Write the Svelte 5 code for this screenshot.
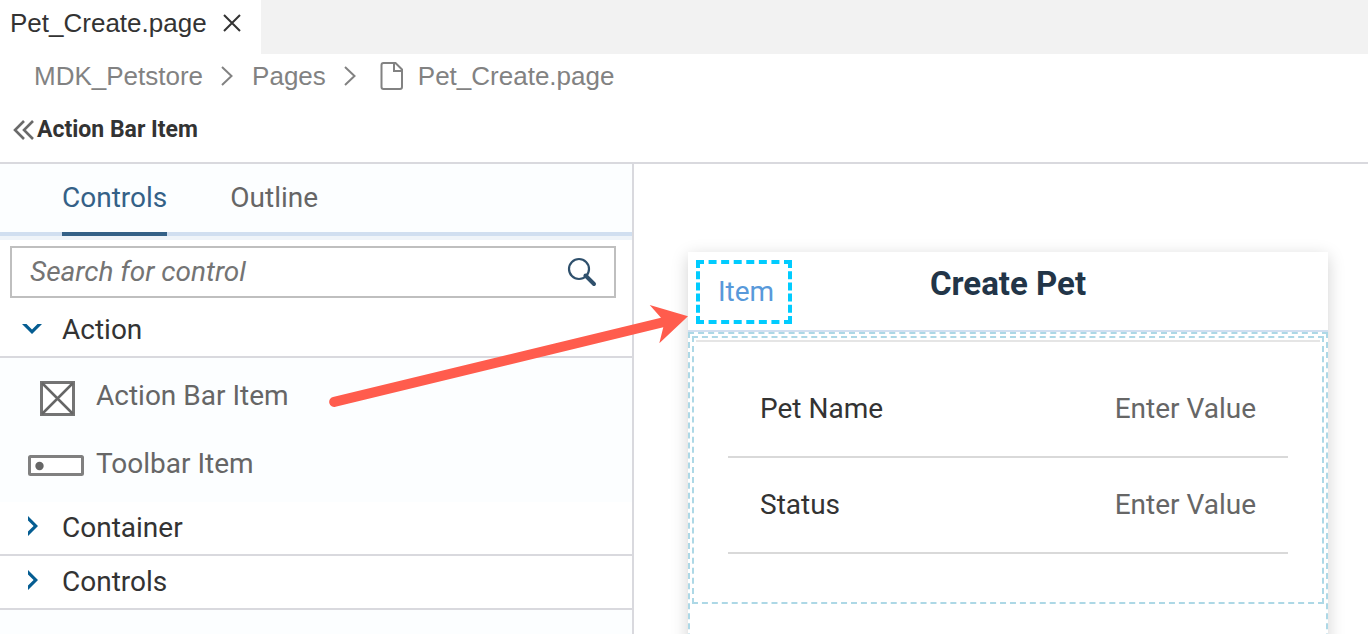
<script>
  const crumbs = ['MDK_Petstore', 'Pages'];
  const fields = ['Pet Name', 'Status'];
  let query = $state('');
  let tab = $state('Controls');
</script>

<div class="app">
  <header class="tabs">
    <div class="file-tab">
      <span>Pet_Create.page</span>
      <button class="plain" aria-label="Close">
        <svg width="18" height="18" viewBox="0 0 18 18"><path d="M1 1L17 17M17 1L1 17" fill="none" stroke="#333" stroke-width="2" /></svg>
      </button>
    </div>
  </header>

  <nav class="crumbs" aria-label="Path">
    {#each crumbs as crumb}
      <a href="#top">{crumb}</a>
      <svg class="sep" width="12" height="20" viewBox="0 0 12 20"><path d="M1 1L10.500 10L1 19" fill="none" stroke="#828282" stroke-width="2" /></svg>
    {/each}
    <svg class="file" width="24" height="28" viewBox="0 0 24 28">
      <path d="M3.500 1H15.500L22 7.500V25Q22 27 20 27H3.500Q1.500 27 1.500 25V3Q1.500 1 3.500 1Z M14 1V9H22" fill="none" stroke="#828282" stroke-width="2" />
    </svg>
    <a href="#top">Pet_Create.page</a>
  </nav>

  <div class="heading">
    <button class="plain" aria-label="Collapse">
      <svg width="22" height="20" viewBox="0 0 22 20"><path d="M11 1L2 10L11 19M20 1L11 10L20 19" fill="none" stroke="#6a6a6a" stroke-width="2.600" /></svg>
    </button>
    <h1>Action Bar Item</h1>
  </div>

  <main>
    <aside>
      <div class="panel-tabs" role="tablist">
        {#each ['Controls', 'Outline'] as name}
          <button role="tab" aria-selected={tab === name} class:active={tab === name} onclick={() => (tab = name)}>{name}</button>
        {/each}
      </div>
      <div class="search-area">
        <div class="search">
          <input type="text" aria-label="Search for control" placeholder="Search for control" bind:value={query} />
          <button class="plain" aria-label="Search">
            <svg width="30" height="30" viewBox="0 0 30 30">
              <circle cx="12" cy="12" r="10" fill="none" stroke="#2f506c" stroke-width="2.200" />
              <path d="M18.500 18.500L27 27" fill="none" stroke="#2f506c" stroke-width="4" stroke-linecap="round" />
            </svg>
          </button>
        </div>
      </div>

      <button class="group">
        <svg width="20" height="20" viewBox="0 0 20 20"><path d="M0 4H4.500L10 9.600L15.500 4H20L10 14Z" fill="#055d92" /></svg>
        Action
      </button>
      <div class="items">
        <div class="item">
          <svg width="56" height="40" viewBox="0 0 56 40">
            <rect x="13.500" y="6.500" width="32" height="32" fill="#fff" stroke="#747474" stroke-width="3" />
            <path d="M14 7L45 38M45 7L14 38" stroke="#666" stroke-width="2.500" />
          </svg>
          Action Bar Item
        </div>
        <div class="item">
          <svg width="56" height="40" viewBox="0 0 56 40">
            <rect x="1.500" y="12.500" width="53" height="18" rx="1" fill="#fff" stroke="#808080" stroke-width="3" />
            <circle cx="11.500" cy="22" r="4.200" fill="#666" />
          </svg>
          Toolbar Item
        </div>
      </div>
      {#each ['Container', 'Controls'] as name}
        <button class="group">
          <svg width="20" height="24" viewBox="0 0 20 24"><path d="M6 0V4.500L11.600 10L6 15.500V20L16 10Z" fill="#055d92" /></svg>
          {name}
        </button>
      {/each}
    </aside>

    <section class="canvas">
      <div class="device">
        <div class="action-bar">
          <button class="bar-item">Item</button>
          <h2>Create Pet</h2>
        </div>
        <div class="page-body">
          <div class="form">
            {#each fields as field}
              <label class="field">
                <span>{field}</span>
                <input type="text" placeholder="Enter Value" />
              </label>
            {/each}
          </div>
        </div>
      </div>
    </section>
  </main>

  <svg class="arrow" width="362" height="106" viewBox="328 303 362 106" aria-hidden="true">
    <path d="M333 397L661 317.700L649.700 305L688 316.300L659.300 343.300L663.300 327.300L335.500 406.800A5 5 0 0 1 333 397Z" fill="#ff5c4d" />
  </svg>
</div>

<style>
  :global(body) { background: #fff; }
  * { box-sizing: border-box; }
  .app {
    position: relative;
    height: 100vh;
    display: flex;
    flex-direction: column;
    overflow: hidden;
    font: 28px/36px Roboto, sans-serif;
    color: #333;
  }
  button, input { font: inherit; color: inherit; }
  svg { display: block; flex: none; }
  .plain { border: 0; background: none; padding: 0; }

  .tabs { display: flex; flex: none; height: 54px; background: #f2f2f2; }
  .file-tab {
    display: flex;
    align-items: center;
    gap: 16px;
    padding: 0 20px 8px 10px;
    background: #fff;
    font: 26px/32px "Liberation Sans", sans-serif;
  }
  .crumbs {
    display: flex;
    flex: none;
    align-items: center;
    height: 44px;
    padding-left: 34px;
    font: 26px/32px "Liberation Sans", sans-serif;
  }
  .crumbs a { color: #828282; text-decoration: none; }
  .sep { margin: 0 19px 0 18px; }
  .file { margin: 0 14px 0 5px; }
  .heading {
    display: flex;
    flex: none;
    align-items: center;
    gap: 2px;
    height: 66px;
    padding-left: 13px;
    border-bottom: 2px solid #d9d9de;
  }
  h1 { margin: 0; font-size: 23px; line-height: 28px; }

  main { display: flex; flex: 1; min-height: 0; }
  aside {
    flex: none;
    width: 634px;
    max-width: 50%;
    background: #fcfeff;
    border-right: 2px solid #d9d9de;
  }
  .panel-tabs {
    display: flex;
    gap: 63px;
    height: 72px;
    padding-left: 62px;
    box-shadow: inset 0 -4px #d1dff0;
  }
  .panel-tabs button {
    border: 0;
    border-bottom: 4px solid transparent;
    background: none;
    padding: 0;
    color: #666;
  }
  .panel-tabs .active { border-color: #346187; color: #346187; }
  .search-area {
    padding: 6px 16px 6px 10px;
    border-top: 4px solid #eff4f9;
    background: #fff;
  }
  .search {
    display: flex;
    align-items: center;
    height: 52px;
    padding: 0 17px 0 18px;
    border: 2px solid #bfbfbf;
    background: #fff;
  }
  .search input { flex: 1; min-width: 0; border: 0; outline: 0; padding: 0; background: none; }
  .search input::placeholder { color: #747474; font-style: italic; opacity: 1; }
  .group {
    display: flex;
    align-items: center;
    gap: 20px;
    width: 100%;
    height: 54px;
    padding: 0 22px;
    border: 0;
    border-bottom: 2px solid #d9d9de;
    background: #fff;
    text-align: left;
  }
  .items { padding: 4px 0; }
  .item {
    display: flex;
    align-items: center;
    gap: 12px;
    height: 68px;
    padding-left: 28px;
    color: #666;
  }

  .canvas { flex: 1; min-width: 0; overflow: hidden; padding: 88px 40px 0 54px; }
  .device {
    display: flex;
    flex-direction: column;
    height: 960px;
    background: #fff;
    box-shadow: 0 4px 16px rgba(0, 0, 0, 0.18);
  }
  .action-bar {
    display: grid;
    grid-template-columns: 1fr auto 1fr;
    align-items: start;
    flex: none;
    height: 80px;
    padding: 8px;
    border-bottom: 2px solid #d1dff0;
  }
  .bar-item {
    justify-self: start;
    width: 96px;
    height: 64px;
    border: 4px dashed #0cf;
    background: #fff;
    padding: 0 0 0 4px;
    color: #5899da;
  }
  h2 { margin: 4px 0 0; font-size: 33px; line-height: 40px; color: #223548; }
  .page-body { flex: 1; border: 2px dashed #add8e6; padding: 2px; }
  .form { border: 2px dashed #add8e6; padding: 2px; height: 268px; }
  .form::before { content: ""; display: block; height: 20px; border-top: 2px solid #e5e5e5; }
  .field {
    display: flex;
    align-items: center;
    justify-content: space-between;
    height: 96px;
    margin: 0 32px;
    padding: 0 32px;
    border-bottom: 2px solid #d9d9d9;
  }
  .field input {
    width: 240px;
    border: 0;
    outline: 0;
    padding: 0;
    background: none;
    text-align: right;
  }
  .field input::placeholder { color: #666; opacity: 1; }

  .arrow { position: absolute; left: 328px; top: 303px; pointer-events: none; }
</style>
